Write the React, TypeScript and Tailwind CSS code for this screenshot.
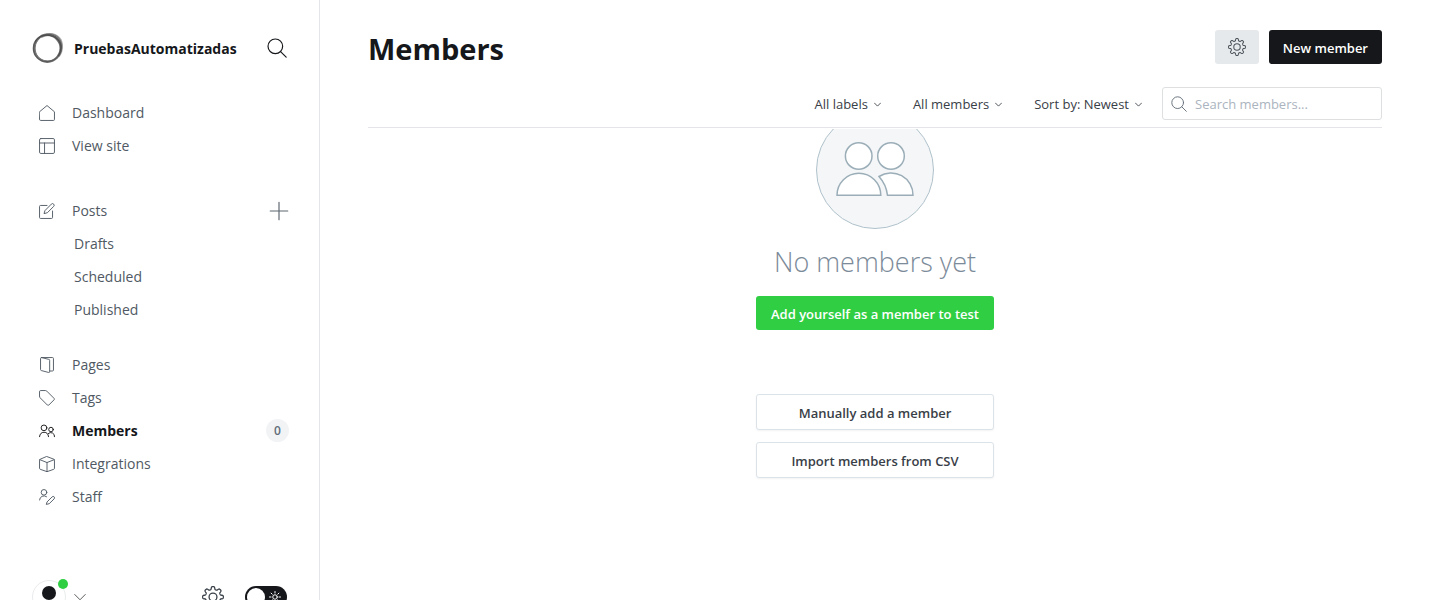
import type { ReactNode } from 'react';

type IconProps = { className?: string; children: ReactNode };

function Icon({ className = 'size-4', children }: IconProps) {
  return (
    <svg
      viewBox="0 0 24 24"
      className={`shrink-0 ${className}`}
      fill="none"
      stroke="currentColor"
      strokeWidth="1.4"
      strokeLinecap="round"
      strokeLinejoin="round"
      aria-hidden="true"
    >
      {children}
    </svg>
  );
}

function gearPath() {
  const points: string[] = [];
  const steps = 160;
  for (let i = 0; i < steps; i++) {
    const a = (i / steps) * Math.PI * 2;
    const wave = Math.tanh(2.2 * Math.cos(8 * a)) / Math.tanh(2.2);
    const r = 9.8 + 1.5 * wave;
    points.push(`${(12 + r * Math.sin(a)).toFixed(2)} ${(12 - r * Math.cos(a)).toFixed(2)}`);
  }
  return `M${points.join('L')}Z`;
}

function GearIcon({ className }: { className?: string }) {
  return (
    <Icon className={className}>
      <path d={gearPath()} />
      <circle cx="12" cy="12" r="4.3" />
    </Icon>
  );
}

function SearchIcon({ className }: { className?: string }) {
  return (
    <Icon className={className}>
      <circle cx="10" cy="10" r="8.8" />
      <path d="M16.3 16.3 23 23" />
    </Icon>
  );
}

function ChevronIcon({ className }: { className?: string }) {
  return (
    <Icon className={className}>
      <path d="M1.5 7 12 17.5 22.5 7" />
    </Icon>
  );
}

function HomeIcon() {
  return (
    <Icon>
      <path d="M.8 10.2 12 .8l11.2 9.4v11.5a1.5 1.5 0 0 1-1.5 1.5H2.3a1.5 1.5 0 0 1-1.5-1.5Z" />
    </Icon>
  );
}

function LayoutIcon() {
  return (
    <Icon>
      <rect x=".8" y=".8" width="22.4" height="22.4" rx="2" />
      <path d="M.8 7.5h22.4M8.3 7.5v15.7" />
    </Icon>
  );
}

function PostsIcon() {
  return (
    <Icon>
      <path d="M12 3.7H2.3A1.5 1.5 0 0 0 .8 5.2v16.5a1.5 1.5 0 0 0 1.5 1.5h16.5a1.5 1.5 0 0 0 1.5-1.5V12" />
      <path d="m9.3 11 9.2-9.3a2.4 2.4 0 0 1 3.5 0 2.4 2.4 0 0 1 0 3.4l-9.3 9.4-4.6 1.3Z" />
    </Icon>
  );
}

function PagesIcon() {
  return (
    <Icon>
      <path d="M3.5.8h16.7a1.5 1.5 0 0 1 1.5 1.5v17.2a1.5 1.5 0 0 1-1.5 1.5H16" />
      <path d="m3.7.8 10.8 2.7A1.5 1.5 0 0 1 16 5v16.6a1.5 1.5 0 0 1-2 1.5L3.5 20.3a1.5 1.5 0 0 1-1.2-1.5V2.3A1.5 1.5 0 0 1 3.7.8Z" />
    </Icon>
  );
}

function TagIcon() {
  return (
    <Icon>
      <path d="M.8 2.3A1.5 1.5 0 0 1 2.3.8h7.3a3 3 0 0 1 2.1.9l10.9 10.9a1.5 1.5 0 0 1 0 2.1l-7.9 7.9a1.5 1.5 0 0 1-2.1 0L1.7 11.7a3 3 0 0 1-.9-2.1Z" />
    </Icon>
  );
}

function MembersIcon() {
  return (
    <Icon>
      <circle cx="7.5" cy="7.3" r="4.3" />
      <path d="M.8 20.5a6.8 7.5 0 0 1 13.5 0" />
      <circle cx="18" cy="9.8" r="3.4" />
      <path d="M14 15.8a5.6 5.6 0 0 1 9.3 4.7" />
    </Icon>
  );
}

function BoxIcon() {
  return (
    <Icon>
      <path d="M12 .9 22.2 4.8a1.5 1.5 0 0 1 1 1.4v12.3a1.5 1.5 0 0 1-1 1.4L12 23.5 1.8 19.9a1.5 1.5 0 0 1-1-1.4V6.2a1.5 1.5 0 0 1 1-1.4Z" />
      <path d="M1.2 5.5 12 9.8l10.8-4.3M12 9.8v13.7" />
    </Icon>
  );
}

function StaffIcon() {
  return (
    <Icon>
      <circle cx="7.5" cy="5" r="4.2" />
      <path d="M.8 16.5a6.7 6.7 0 0 1 10.5-5" />
      <path d="m12.5 19 7.2-7.2a2.1 2.1 0 0 1 3 0 2.1 2.1 0 0 1 0 3L15.4 22l-3.9 1Z" />
    </Icon>
  );
}

function SiteLogo() {
  return (
    <svg viewBox="0 0 32 32" className="size-8 shrink-0" fill="none" aria-hidden="true">
      <path d="M9 4.6C16 .8 25 2 28.5 8.5c2 4.500 1.500 11-2 15.500" stroke="#b0b0b0" strokeWidth="3" />
      <circle cx="15.3" cy="16.3" r="13.4" stroke="#6a6a6a" strokeWidth="2.4" />
      <ellipse cx="16.5" cy="15.5" rx="13" ry="14" stroke="#777" strokeWidth="1" transform="rotate(35 16.5 15.5)" />
      <ellipse cx="15.5" cy="16" rx="14.3" ry="13.5" stroke="#555" strokeWidth=".8" transform="rotate(-30 15.5 16)" />
      <path d="M3 10C6 3 17 1 24 6c6 4 6 13 2 18" stroke="#444" strokeWidth=".8" />
    </svg>
  );
}

type NavItem = { label: string; icon?: ReactNode; active?: boolean; extra?: ReactNode };

const groups: { className: string; items: NavItem[] }[] = [
  {
    className: '',
    items: [
      { label: 'Dashboard', icon: <HomeIcon /> },
      { label: 'View site', icon: <LayoutIcon /> },
    ],
  },
  {
    className: 'mt-8',
    items: [
      {
        label: 'Posts',
        icon: <PostsIcon />,
        extra: (
          <button type="button" aria-label="New post" className="text-[#5d666f]">
            <Icon className="size-5">
              <path d="M12 1.5v21M1.5 12h21" />
            </Icon>
          </button>
        ),
      },
      { label: 'Drafts' },
      { label: 'Scheduled' },
      { label: 'Published' },
    ],
  },
  {
    className: 'mt-[22px]',
    items: [
      { label: 'Pages', icon: <PagesIcon /> },
      { label: 'Tags', icon: <TagIcon /> },
      {
        label: 'Members',
        icon: <MembersIcon />,
        active: true,
        extra: (
          <span className="flex h-[23px] min-w-[23px] items-center justify-center rounded-full bg-[#f1f3f5] text-xs font-semibold text-[#626d79]">
            0
          </span>
        ),
      },
      { label: 'Integrations', icon: <BoxIcon /> },
      { label: 'Staff', icon: <StaffIcon /> },
    ],
  },
];

function Sidebar() {
  return (
    <aside className="flex w-80 shrink-0 flex-col border-r border-[#e3e5e8]">
      <div className="flex h-24 shrink-0 items-center px-8">
        <SiteLogo />
        <span className="ml-2.5 pt-0.5 text-sm font-bold text-[#15171a]">PruebasAutomatizadas</span>
        <button type="button" aria-label="Search site" className="ml-auto text-[#15171a]">
          <SearchIcon className="size-5" />
        </button>
      </div>
      <nav className="shrink-0 text-sm">
        {groups.map((group) => (
          <ul key={group.items[0].label} className={group.className}>
            {group.items.map((item) => (
              <li key={item.label} className="flex h-[33px] items-center justify-between pr-[30px] pl-[39px]">
                <a
                  href="#"
                  className={
                    item.active
                      ? 'flex items-center gap-[17px] font-bold text-[#15171a]'
                      : item.icon
                        ? 'flex items-center gap-[17px] text-[#505963]'
                        : 'pl-[35px] text-[#505963]'
                  }
                >
                  {item.icon}
                  {item.label}
                </a>
                {item.extra}
              </li>
            ))}
          </ul>
        ))}
      </nav>
      <div className="mt-[67px] flex shrink-0 items-center px-8">
        <button type="button" aria-label="User menu" className="flex items-center text-[#15171a]">
          <span className="relative block size-[34px] rounded-full border border-[#e9ebed]">
            <svg viewBox="0 0 32 32" className="size-8" aria-hidden="true">
              <circle cx="16" cy="12" r="7" fill="#15171a" />
              <path d="M5 27c2-8 20-8 22 0a16 16 0 0 1-22 0Z" fill="#15171a" />
            </svg>
            <span className="absolute -top-0.5 -right-[3px] size-2.5 rounded-full bg-[#30cf43]" />
          </span>
          <ChevronIcon className="ml-2 size-3" />
        </button>
        <a href="#" aria-label="Settings" className="ml-auto text-[#394047]">
          <GearIcon className="size-[22px]" />
        </a>
        <label className="ml-[21px] flex h-[22px] w-[42px] cursor-pointer items-center justify-between rounded-full bg-[#15171a] pr-1.5 pl-0.5">
          <input type="checkbox" aria-label="Night mode" className="size-[18px] appearance-none rounded-full bg-white" />
          <Icon className="size-3 text-white">
            <circle cx="12" cy="12" r="4.5" strokeWidth="2" />
            <path
              strokeWidth="2"
              d="M12 1v3M12 20v3M1 12h3M20 12h3M4.2 4.2l2.2 2.2M17.6 17.6l2.2 2.2M19.8 4.2l-2.2 2.2M6.4 17.6l-2.2 2.2"
            />
          </Icon>
        </label>
      </div>
    </aside>
  );
}

function FilterButton({ label }: { label: string }) {
  return (
    <button type="button" className="flex items-center gap-1.5 pt-0.5 text-[13px] text-[#394047]">
      {label}
      <ChevronIcon className="size-[7px] stroke-[3]" />
    </button>
  );
}

function MembersHeader() {
  return (
    <header className="relative z-10 mx-12 border-b border-[#e3e5e8] bg-white pt-[30px] pb-[7px] shadow-[0_1px_0_#fff]">
      <div className="flex h-[34px] items-center gap-2.5">
        <h1 className="mr-auto pt-1 text-[29px] leading-9 font-bold text-[#15171a]">Members</h1>
        <button
          type="button"
          aria-label="Members settings"
          className="flex h-[34px] w-11 items-center justify-center rounded-[3px] bg-[#e6e9eb] text-[#4d555d]"
        >
          <GearIcon className="size-[18px]" />
        </button>
        <button
          type="button"
          className="h-[34px] rounded-[3px] bg-[#15171a] px-3.5 pt-1 text-[13px] font-semibold text-white"
        >
          New member
        </button>
      </div>
      <div className="mt-[23px] flex h-[33px] items-center justify-end">
        <div className="mr-5 flex gap-8">
          <FilterButton label="All labels" />
          <FilterButton label="All members" />
          <FilterButton label="Sort by: Newest" />
        </div>
        <label className="flex h-[33px] w-[220px] items-center gap-2 rounded-[3px] border border-[#dddfe1] px-2 text-[#626d79]">
          <SearchIcon className="size-4" />
          <input
            type="text"
            aria-label="Search members"
            placeholder="Search members..."
            className="min-w-0 flex-1 pt-0.5 text-[13px] outline-none placeholder:text-[#abb4be]"
          />
        </label>
      </div>
    </header>
  );
}

function EmptyState() {
  return (
    <section className="-mt-[18px] flex flex-col items-center">
      <svg viewBox="0 0 120 120" className="size-[120px]" aria-hidden="true">
        <circle cx="60" cy="60" r="58.5" fill="#f4f6f8" stroke="#b0c2cb" />
        <g fill="#fff" stroke="#9baeb8" strokeWidth="1.5">
          <circle cx="43.7" cy="46" r="13.3" />
          <circle cx="76" cy="46" r="13.3" />
          <path d="M22 85.3a21.8 22 0 0 1 43.8 0Z" />
          <path d="M64 66.5a22 22 0 0 1 34 18.8H72.5A34 34 0 0 0 64 66.5Z" />
        </g>
      </svg>
      <h2 className="mt-3.5 text-[27px] leading-9 font-light text-[#7c8b9a]">No members yet</h2>
      <div className="mt-4 flex w-[238px] flex-col text-[13px] font-semibold">
        <button type="button" className="h-[34px] rounded-[3px] bg-[#30cf43] pt-1 whitespace-nowrap text-white">
          Add yourself as a member to test
        </button>
        <button
          type="button"
          className="mt-16 h-9 rounded-[3px] border border-[#dce3e8] bg-white pt-1 text-[#394047] shadow-xs"
        >
          Manually add a member
        </button>
        <button
          type="button"
          className="mt-3 h-9 rounded-[3px] border border-[#dce3e8] bg-white pt-1 text-[#394047] shadow-xs"
        >
          Import members from CSV
        </button>
      </div>
    </section>
  );
}

export default function App() {
  return (
    <div className="flex h-screen overflow-hidden bg-white font-['Open_Sans','Noto_Sans',sans-serif]">
      <Sidebar />
      <main className="min-w-0 flex-1">
        <MembersHeader />
        <EmptyState />
      </main>
    </div>
  );
}
